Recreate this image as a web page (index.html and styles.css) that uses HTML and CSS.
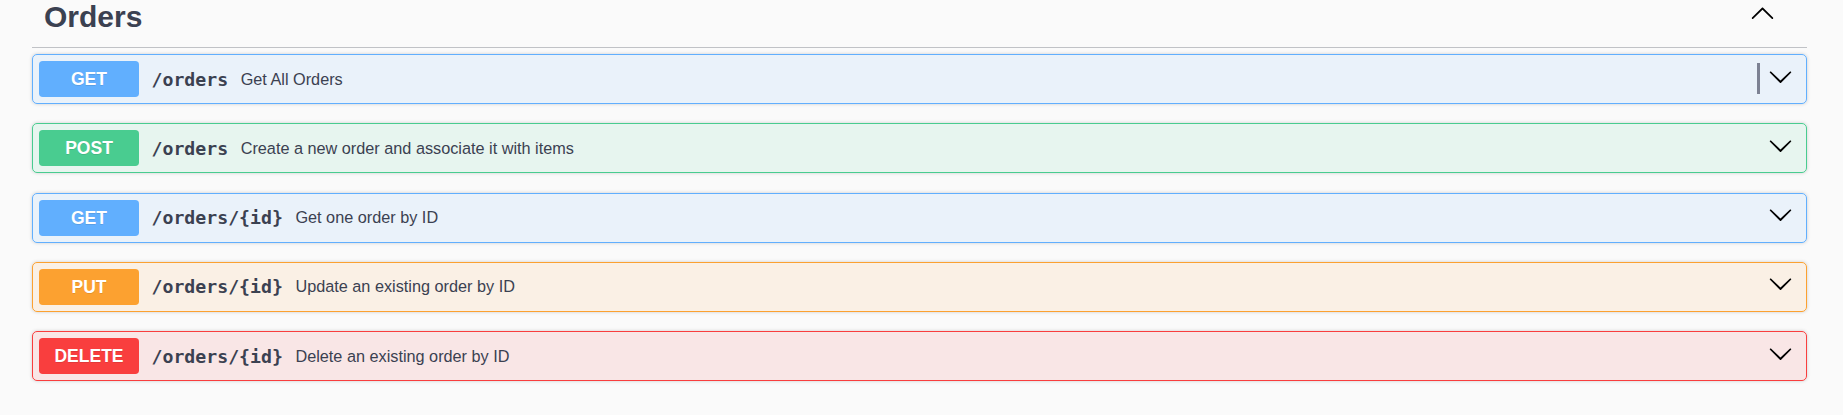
FILE: index.html
```html
<!DOCTYPE html>
<html lang="en">
<head>
<meta charset="utf-8">
<title>Orders</title>
<link rel="stylesheet" href="styles.css">
</head>
<body>
<div class="wrapper">
  <div class="tag-header">
    <h3 class="tag-title">Orders</h3>
    <svg class="arrow-up" viewBox="0 0 20 20" width="25" height="25" aria-hidden="true"><path d="M17.418 14.908c.272.268.709.268.979 0s.271-.701 0-.969l-7.908-7.83c-.27-.268-.707-.268-.979 0l-7.908 7.83c-.27.268-.27.701 0 .969.271.268.709.268.979 0L10 7.767l7.418 7.141z"/></svg>
  </div>

  <div class="opblock get">
    <span class="method">GET</span>
    <span class="path">/orders</span>
    <span class="desc">Get All Orders</span>
    <span class="focus-bar"></span>
    <svg class="arrow-down" viewBox="0 0 20 20" width="25" height="25" aria-hidden="true"><path d="M17.418 6.109c.272-.268.709-.268.979 0s.271.701 0 .969l-7.908 7.83c-.27.268-.707.268-.979 0l-7.908-7.83c-.27-.268-.27-.701 0-.969.271-.268.709-.268.979 0L10 13.25l7.418-7.141z"/></svg>
  </div>

  <div class="opblock post">
    <span class="method">POST</span>
    <span class="path">/orders</span>
    <span class="desc">Create a new order and associate it with items</span>
    <svg class="arrow-down" viewBox="0 0 20 20" width="25" height="25" aria-hidden="true"><path d="M17.418 6.109c.272-.268.709-.268.979 0s.271.701 0 .969l-7.908 7.83c-.27.268-.707.268-.979 0l-7.908-7.83c-.27-.268-.27-.701 0-.969.271-.268.709-.268.979 0L10 13.25l7.418-7.141z"/></svg>
  </div>

  <div class="opblock get">
    <span class="method">GET</span>
    <span class="path">/orders/{id}</span>
    <span class="desc">Get one order by ID</span>
    <svg class="arrow-down" viewBox="0 0 20 20" width="25" height="25" aria-hidden="true"><path d="M17.418 6.109c.272-.268.709-.268.979 0s.271.701 0 .969l-7.908 7.83c-.27.268-.707.268-.979 0l-7.908-7.83c-.27-.268-.27-.701 0-.969.271-.268.709-.268.979 0L10 13.25l7.418-7.141z"/></svg>
  </div>

  <div class="opblock put">
    <span class="method">PUT</span>
    <span class="path">/orders/{id}</span>
    <span class="desc">Update an existing order by ID</span>
    <svg class="arrow-down" viewBox="0 0 20 20" width="25" height="25" aria-hidden="true"><path d="M17.418 6.109c.272-.268.709-.268.979 0s.271.701 0 .969l-7.908 7.83c-.27.268-.707.268-.979 0l-7.908-7.83c-.27-.268-.27-.701 0-.969.271-.268.709-.268.979 0L10 13.25l7.418-7.141z"/></svg>
  </div>

  <div class="opblock delete">
    <span class="method">DELETE</span>
    <span class="path">/orders/{id}</span>
    <span class="desc">Delete an existing order by ID</span>
    <svg class="arrow-down" viewBox="0 0 20 20" width="25" height="25" aria-hidden="true"><path d="M17.418 6.109c.272-.268.709-.268.979 0s.271.701 0 .969l-7.908 7.83c-.27.268-.707.268-.979 0l-7.908-7.83c-.27-.268-.27-.701 0-.969.271-.268.709-.268.979 0L10 13.25l7.418-7.141z"/></svg>
  </div>
</div>
</body>
</html>
```

FILE: styles.css
```css
html, body {
  margin: 0;
  background: #fafafa;
  color: #3b4151;
  font-family: "Liberation Sans", Arial, sans-serif;
}

.wrapper {
  padding: 0 36px 0 32px;
}

.tag-header {
  display: flex;
  align-items: flex-start;
  padding: 0 32px 13px 12px;
  border-bottom: 1px solid rgba(59, 65, 81, 0.3);
  margin-bottom: 6px;
}

.tag-title {
  flex: 1;
  margin: 0;
  font-size: 30px;
  line-height: 34px;
  font-weight: 700;
  color: #3b4151;
}

.arrow-up,
.arrow-down {
  flex: none;
  display: block;
  fill: #000;
}

.opblock {
  display: flex;
  align-items: center;
  box-sizing: border-box;
  height: 50px;
  padding: 0 6px;
  margin-bottom: 19.25px;
  border: 1px solid #000;
  border-radius: 5px;
  box-shadow: 0 0 3.75px rgba(0, 0, 0, 0.19);
}

.method {
  flex: none;
  width: 100px;
  height: 36px;
  line-height: 36px;
  border-radius: 3.75px;
  text-align: center;
  font-size: 17.5px;
  font-weight: 700;
  color: #fff;
  text-shadow: 0 1px 0 rgba(0, 0, 0, 0.1);
}

.path {
  flex: none;
  padding: 0 12.5px;
  font-family: "DejaVu Sans Mono", "Liberation Mono", monospace;
  font-size: 18.2px;
  font-weight: 700;
  color: #3b4151;
}

.desc {
  flex: 1;
  font-size: 16.25px;
  color: #3b4151;
}

.focus-bar {
  flex: none;
  width: 3px;
  height: 31px;
  margin: 0 8px 1px 0;
  background: #7d8293;
}

.arrow-down {
  margin: 0 7px 6px 0;
}

.get { border-color: #61affe; background: rgba(97, 175, 254, 0.1); }
.get .method { background: #61affe; }

.post { border-color: #49cc90; background: rgba(73, 204, 144, 0.1); }
.post .method { background: #49cc90; }

.put { border-color: #fca130; background: rgba(252, 161, 48, 0.1); }
.put .method { background: #fca130; }

.delete { border-color: #f93e3e; background: rgba(249, 62, 62, 0.1); }
.delete .method { background: #f93e3e; }
```
